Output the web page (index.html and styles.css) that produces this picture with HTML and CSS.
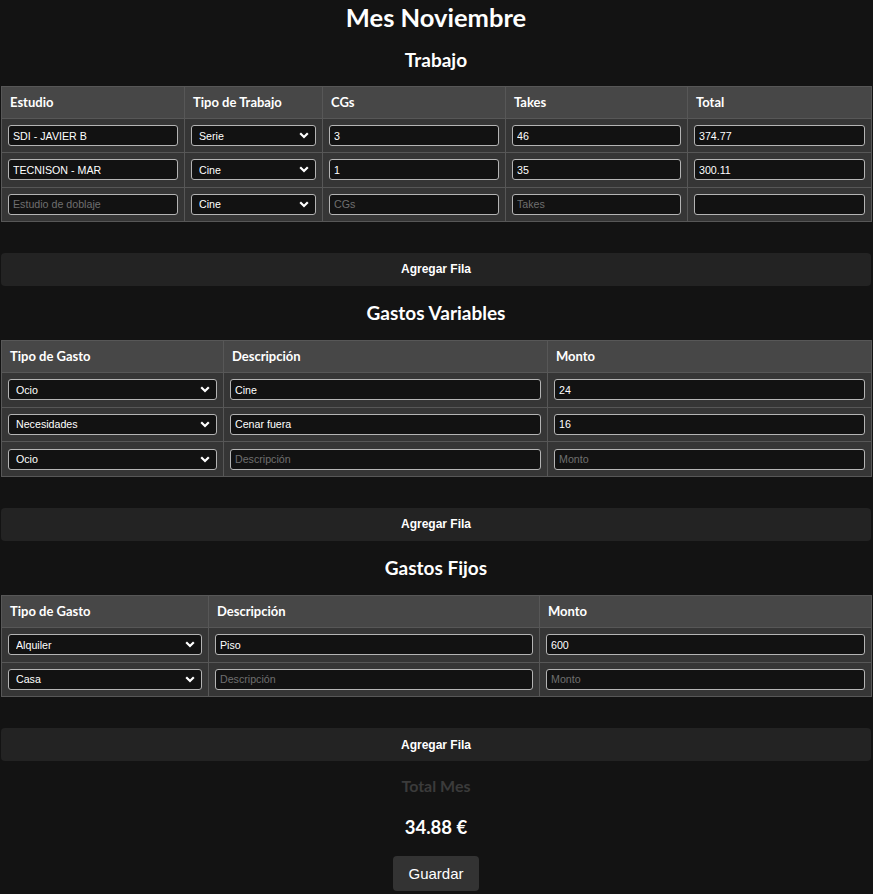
FILE: index.html
```html
<!DOCTYPE html>
<html lang="es">
<head>
<meta charset="utf-8">
<title>Mes Noviembre</title>
<link rel="stylesheet" href="styles.css">
</head>
<body>
<main class="page">
  <h1 class="title">Mes Noviembre</h1>

  <h2 class="section-title first">Trabajo</h2>
  <table class="grid">
    <colgroup>
      <col class="w183"><col class="w138"><col class="w183"><col class="w182"><col class="w184">
    </colgroup>
    <thead>
      <tr><th>Estudio</th><th>Tipo de Trabajo</th><th>CGs</th><th>Takes</th><th>Total</th></tr>
    </thead>
    <tbody>
      <tr>
        <td><input class="field" type="text" value="SDI - JAVIER B"></td>
        <td><select class="field select"><option>Serie</option><option>Cine</option></select></td>
        <td><input class="field" type="text" value="3"></td>
        <td><input class="field" type="text" value="46"></td>
        <td><input class="field" type="text" value="374.77"></td>
      </tr>
      <tr>
        <td><input class="field" type="text" value="TECNISON - MAR"></td>
        <td><select class="field select"><option>Cine</option><option>Serie</option></select></td>
        <td><input class="field" type="text" value="1"></td>
        <td><input class="field" type="text" value="35"></td>
        <td><input class="field" type="text" value="300.11"></td>
      </tr>
      <tr>
        <td><input class="field" type="text" placeholder="Estudio de doblaje"></td>
        <td><select class="field select"><option>Cine</option><option>Serie</option></select></td>
        <td><input class="field" type="text" placeholder="CGs"></td>
        <td><input class="field" type="text" placeholder="Takes"></td>
        <td><input class="field" type="text"></td>
      </tr>
    </tbody>
  </table>
  <button class="add-btn" type="button">Agregar Fila</button>

  <h2 class="section-title">Gastos Variables</h2>
  <table class="grid">
    <colgroup>
      <col class="w222"><col class="w324"><col class="w324">
    </colgroup>
    <thead>
      <tr><th>Tipo de Gasto</th><th>Descripción</th><th>Monto</th></tr>
    </thead>
    <tbody>
      <tr class="tall">
        <td><select class="field select"><option>Ocio</option><option>Necesidades</option></select></td>
        <td><input class="field" type="text" value="Cine"></td>
        <td><input class="field" type="text" value="24"></td>
      </tr>
      <tr class="tall">
        <td><select class="field select"><option>Necesidades</option><option>Ocio</option></select></td>
        <td><input class="field" type="text" value="Cenar fuera"></td>
        <td><input class="field" type="text" value="16"></td>
      </tr>
      <tr class="tall">
        <td><select class="field select"><option>Ocio</option><option>Necesidades</option></select></td>
        <td><input class="field" type="text" placeholder="Descripción"></td>
        <td><input class="field" type="text" placeholder="Monto"></td>
      </tr>
    </tbody>
  </table>
  <button class="add-btn" type="button">Agregar Fila</button>

  <h2 class="section-title">Gastos Fijos</h2>
  <table class="grid">
    <colgroup>
      <col class="w207"><col class="w331"><col class="w332">
    </colgroup>
    <thead>
      <tr><th>Tipo de Gasto</th><th>Descripción</th><th>Monto</th></tr>
    </thead>
    <tbody>
      <tr class="tall">
        <td><select class="field select"><option>Alquiler</option><option>Casa</option></select></td>
        <td><input class="field" type="text" value="Piso"></td>
        <td><input class="field" type="text" value="600"></td>
      </tr>
      <tr class="tall">
        <td><select class="field select"><option>Casa</option><option>Alquiler</option></select></td>
        <td><input class="field" type="text" placeholder="Descripción"></td>
        <td><input class="field" type="text" placeholder="Monto"></td>
      </tr>
    </tbody>
  </table>
  <button class="add-btn" type="button">Agregar Fila</button>

  <h3 class="total-label">Total Mes</h3>
  <p class="total-value">34.88 €</p>
  <button class="save-btn" type="button">Guardar</button>
</main>
</body>
</html>
```

FILE: styles.css
```css
html, body {
  margin: 0;
  padding: 0;
  background: #131313;
  color: #ffffff;
}

.page {
  display: flex;
  flex-direction: column;
  align-items: stretch;
  padding: 0 2px 0 1px;
  font-family: "Lato", "Open Sans", sans-serif;
}

.title {
  margin: 1px 0 0;
  font-size: 25.5px;
  line-height: 32px;
  font-weight: 700;
  text-align: center;
}

.section-title {
  margin: 15px 0 15px;
  font-size: 19px;
  line-height: 24px;
  font-weight: 700;
  text-align: center;
}

.section-title.first {
  margin-bottom: 14px;
}

.grid {
  width: 870px;
  border-collapse: collapse;
  table-layout: fixed;
  border: 1px solid #575757;
}

.w183 { width: 183px; }
.w138 { width: 138px; }
.w182 { width: 182px; }
.w184 { width: 184px; }
.w222 { width: 222px; }
.w324 { width: 324px; }
.w207 { width: 207px; }
.w331 { width: 331px; }
.w332 { width: 332px; }

.grid th {
  background: #474747;
  border: 1px solid #575757;
  padding: 8px 8px;
  box-sizing: border-box;
  text-align: left;
  font-size: 13px;
  line-height: 15px;
  font-weight: 700;
  color: #ffffff;
}

.grid td {
  background: #363636;
  border: 1px solid #575757;
  padding: 6px 6px;
  height: 34.3px;
  box-sizing: border-box;
}

.grid .tall td {
  height: 34.67px;
}

.field {
  display: block;
  width: 100%;
  height: 21px;
  box-sizing: border-box;
  margin: 0;
  padding: 1px 4px;
  background: #121212;
  color: #ffffff;
  border: 1px solid #b4b4b4;
  border-radius: 3px;
  font-family: "Liberation Sans", Arial, sans-serif;
  font-size: 10.67px;
  outline: none;
}

.field::placeholder {
  color: #6f6f6f;
}

.select {
  appearance: none;
  -webkit-appearance: none;
  padding: 1px 20px 1px 7px;
  background-image: url("data:image/svg+xml,%3Csvg xmlns='http://www.w3.org/2000/svg' width='10' height='7' viewBox='0 0 10 7'%3E%3Cpath d='M1.2 1.2L5 5l3.8-3.8' stroke='white' stroke-width='2.2' fill='none'/%3E%3C/svg%3E");
  background-repeat: no-repeat;
  background-position: right 6px center;
  background-size: 10px 7px;
}

.add-btn {
  margin: 31px 0 0;
  height: 33px;
  width: 870px;
  background: #232323;
  color: #ffffff;
  border: none;
  border-radius: 4px;
  font-family: "Liberation Sans", Arial, sans-serif;
  font-size: 12px;
  font-weight: 700;
  cursor: pointer;
}

.total-label {
  margin: 15px 0 0;
  font-size: 16px;
  line-height: 20px;
  font-weight: 700;
  text-align: center;
  color: #3b3b3b;
}

.total-value {
  margin: 19px 0 0;
  font-size: 18.5px;
  line-height: 24px;
  font-weight: 700;
  text-align: center;
}

.save-btn {
  align-self: center;
  margin: 17px 0 0;
  height: 35px;
  width: 86px;
  background: #333333;
  color: #ffffff;
  border: none;
  border-radius: 4px;
  font-family: "Liberation Sans", Arial, sans-serif;
  font-size: 15px;
  cursor: pointer;
}
```
